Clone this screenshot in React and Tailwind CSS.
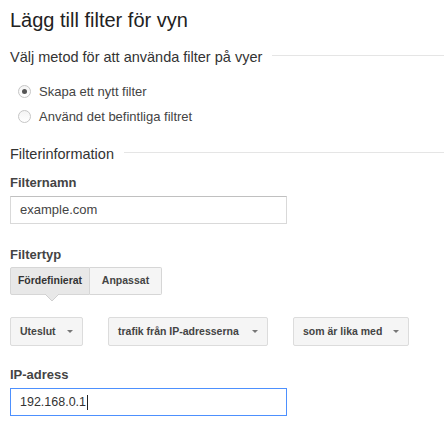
import React from 'react';

const Radio = ({ checked, label }) => (
  <label className="flex items-center h-[25px] pl-[8px]">
    <span className="w-[13px] h-[13px] rounded-full border border-[#c6c6c6] bg-gradient-to-b from-[#f4f4f4] to-[#ffffff] flex items-center justify-center">
      {checked && <span className="w-[5px] h-[5px] rounded-full bg-[#555]" />}
    </span>
    <span className="ml-[8px] text-[13px] leading-[20px] text-[#444]">{label}</span>
  </label>
);

const SectionHead = ({ children }) => (
  <div className="flex items-center">
    <span className="text-[14.5px] leading-[20px] text-[#333]">{children}</span>
    <span className="flex-1 ml-[10px] h-px bg-[#e5e5e5] translate-y-[-2px]" />
  </div>
);

const Caret = () => (
  <svg width="8" height="5" viewBox="0 0 8 5" className="shrink-0">
    <path d="M1 1h6L4 4z" fill="#777" />
  </svg>
);

const Select = ({ label, width }) => (
  <div
    className={`${width} h-[29px] flex items-center justify-between pl-[9px] pr-[8px] rounded-[2px] border border-[#dcdcdc] bg-[#f5f5f5] text-[10.5px] font-bold text-[#444]`}
  >
    <span>{label}</span>
    <Caret />
  </div>
);

export default function App() {
  return (
    <div className="w-[444px] h-[439px] bg-white pl-[10px] pt-[8px] font-['Liberation_Sans',Arial,sans-serif] overflow-hidden">
      <h1 className="text-[20px] leading-[24px] text-[#222]">Lägg till filter för vyn</h1>

      <div className="mt-[15px]">
        <SectionHead>Välj metod för att använda filter på vyer</SectionHead>
      </div>

      <div className="mt-[12px] flex flex-col">
        <Radio checked label="Skapa ett nytt filter" />
        <Radio label="Använd det befintliga filtret" />
      </div>

      <div className="mt-[15px]">
        <SectionHead>Filterinformation</SectionHead>
      </div>

      <div className="mt-[10px] text-[13px] leading-[18px] font-bold text-[#444]">Filternamn</div>
      <div className="mt-[4px] w-[277px] h-[28px] border border-[#d9d9d9] border-t-[#c0c0c0] flex items-center pl-[9px] text-[13px] text-[#444]">
        example.com
      </div>

      <div className="mt-[22px] text-[13px] leading-[18px] font-bold text-[#444]">Filtertyp</div>
      <div className="mt-[3px] flex">
        <div className="relative w-[80px] h-[28px] flex items-center justify-center bg-[#e8e8e8] border border-[#d6d6d6] rounded-l-[2px] text-[10.5px] font-bold text-[#333]">
          Fördefinierat
          <svg width="14" height="8" viewBox="0 0 14 8" className="absolute left-[34px] top-[26px]">
            <path d="M0 0L7 7L14 0" fill="#e8e8e8" stroke="#d0d0d0" />
            <path d="M1 0h12" stroke="#e8e8e8" strokeWidth="2" />
          </svg>
        </div>
        <div className="w-[72px] h-[28px] flex items-center justify-center bg-[#f5f5f5] border border-l-0 border-[#d6d6d6] rounded-r-[2px] text-[10.5px] font-bold text-[#444]">
          Anpassat
        </div>
      </div>

      <div className="mt-[22px] flex">
        <Select label="Uteslut" width="w-[73px]" />
        <div className="ml-[25px]">
          <Select label="trafik från IP-adresserna" width="w-[160px]" />
        </div>
        <div className="ml-[25px]">
          <Select label="som är lika med" width="w-[116px]" />
        </div>
      </div>

      <div className="mt-[20px] text-[13px] leading-[18px] font-bold text-[#444]">IP-adress</div>
      <div className="mt-[4px] w-[277px] h-[28px] border border-[#4d90fe] flex items-center pl-[9px] text-[12.5px] text-[#333]">
        192.168.0.1
        <span className="ml-[1px] w-px h-[15px] bg-[#222]" />
      </div>
    </div>
  );
}
